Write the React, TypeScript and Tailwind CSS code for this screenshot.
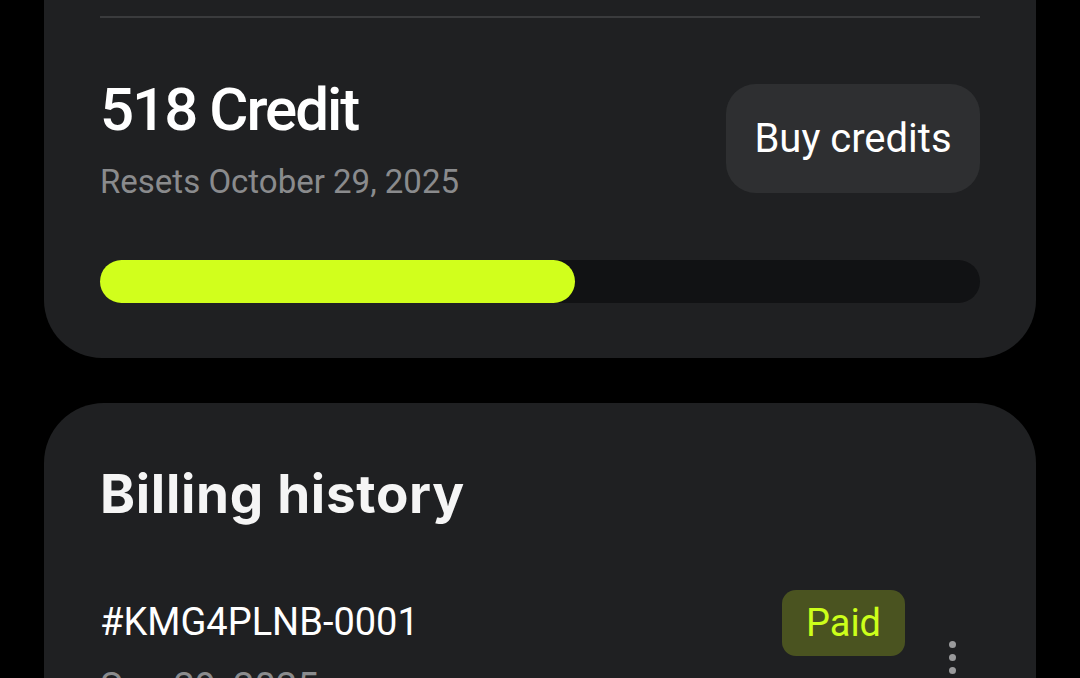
import React from "react";

export default function App() {
  const roboto = { fontFamily: "Roboto, 'Noto Sans', sans-serif" };
  return (
    <div className="min-h-[678px] w-[1080px] bg-black px-[44px] pb-10 overflow-hidden" style={roboto}>
      {/* Credits card */}
      <div className="rounded-b-[58px] bg-[#1f2022] px-[56px] pt-[16px] pb-[55px]">
        <div className="h-[2px] w-full bg-[#3a3b3d]" />
        <div className="mt-[56px] flex items-start justify-between">
          <div className="flex flex-col">
            <div className="text-[60px] leading-[72px] font-medium tracking-[-2px] text-white">518 Credit</div>
            <div className="mt-[16px] text-[33px] leading-[40px] text-[#8a8b8d]">Resets October 29, 2025</div>
          </div>
          <button className="mt-[10px] flex h-[109px] w-[254px] items-center justify-center rounded-[30px] bg-[#2e2f31] text-[40px] text-white">
            Buy credits
          </button>
        </div>
        <div className="mt-[58px] h-[43px] w-full rounded-full bg-[#111214]">
          <div className="h-full w-[54%] rounded-full bg-[#d1ff1c]" />
        </div>
      </div>

      {/* Billing history card */}
      <div className="mt-[45px] rounded-t-[60px] bg-[#1f2022] px-[56px] pt-[60px] pb-[40px]">
        <div
          className="text-[53px] leading-[62px] font-bold tracking-[0.7px] text-[#f5f5f5]"
          style={{ fontFamily: "Inter, 'Noto Sans', sans-serif" }}
        >
          Billing history
        </div>
        <div className="mt-[65px] flex items-start">
          <div className="flex flex-1 flex-col pt-[9px]">
            <div className="text-[38px] leading-[46px] text-white">#KMG4PLNB-0001</div>
            <div className="mt-[19px] text-[38px] leading-[46px] text-[#8a8b8d]">Sep 29, 2025</div>
          </div>
          <div className="flex flex-col items-end">
            <div className="flex h-[66px] w-[123px] items-center justify-center rounded-[14px] bg-[#4a5320] text-[38px] text-[#ccff1a]">
              Paid
            </div>
          </div>
          <div className="ml-[43px] mr-[24px] mt-[51px] flex w-[8px] flex-col items-center gap-[6px]">
            <span className="block h-[7px] w-[7px] rounded-full bg-[#9a9a9c]" />
            <span className="block h-[7px] w-[7px] rounded-full bg-[#9a9a9c]" />
            <span className="block h-[7px] w-[7px] rounded-full bg-[#9a9a9c]" />
          </div>
        </div>
      </div>
    </div>
  );
}
